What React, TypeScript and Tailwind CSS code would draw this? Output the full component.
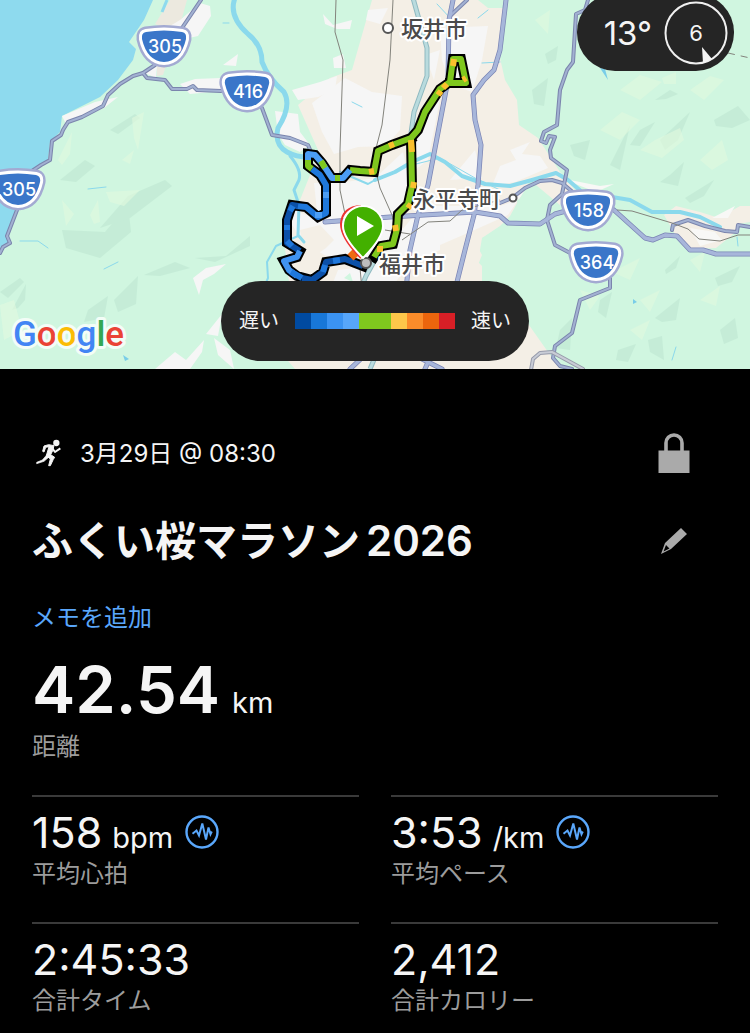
import React from "react";

const FONT = "font-['Inter','Noto_Sans_CJK_JP',sans-serif]";

const DARK_FACETS = [
  "110,130 135,114 140,118 118,134",
  "62,230 105,232 128,205 131,232 100,258 66,248",
  "100,228 128,196 165,180 172,186 130,218",
  "0,292 20,278 24,282 8,298",
  "12,310 26,284 25,300 18,308",
  "60,180 85,160 95,166 76,182",
  "144,275 175,262 190,268 160,276",
  "195,258 226,256 250,236 250,246 215,262",
  "88,310 108,296 104,318 84,322",
  "114,300 138,276 136,304 118,312",
  "610,165 630,125 620,170 612,166",
  "640,130 655,122 640,146 630,145",
  "660,140 690,112 678,140 665,150",
  "714,120 738,106 750,120 732,128 716,126",
  "670,175 684,162 678,186 660,182",
  "655,100 670,90 678,94 666,99",
  "570,145 590,140 585,160 574,156",
  "685,198 714,180 704,196 690,203",
  "655,318 680,298 676,320 662,322",
  "600,300 612,292 606,318 598,312",
  "648,340 662,336 664,360 650,352",
  "720,330 735,318 738,338 724,344",
  "665,270 680,256 676,268 666,274",
  "560,330 572,318 570,350 556,348",
  "532,90 548,78 544,106 534,104",
  "715,278 740,266 732,282 718,286",
  "618,350 636,344 628,362 616,360",
  "545,54 558,46 556,60 548,64",
  "250,340 270,320 280,352 262,360",
];
const LIGHT_FACETS = [
  "132,118 144,112 138,150 134,138",
  "58,160 72,132 70,154 62,165",
  "122,160 134,150 130,164",
  "62,200 74,214 66,226",
  "90,215 98,200 100,222 94,224",
  "106,192 140,190 124,206 110,202",
  "0,305 14,300 22,330 4,340",
  "620,90 640,75 662,82 640,100",
  "600,130 622,112 640,120 620,140",
  "690,90 710,76 724,80 704,100",
  "640,150 655,140 680,128 684,140 662,158",
  "700,160 722,140 728,160 712,170",
  "612,272 640,258 630,280",
  "640,300 660,290 650,312",
  "690,260 705,252 700,272",
  "700,300 720,286 716,306",
  "580,290 600,296 590,310",
  "630,330 650,320 642,340",
  "662,78 676,72 676,84 664,84",
  "535,20 550,10 548,34",
];

const ROADS = [
  "M201 0L182 28L155 65L143 73L133 76L120 84L108 95L103 106L82 117L68 122L63 130L61 135L52 141L50 160L41 165L32 171",
  "M17 210L7 236L10 243L3 247L0 253",
  "M143 73L147 78L165 80L172 89L187 89L193 86L197 90L221 91",
  "M262 108L272 135L290 138L308 145L311 152",
  "M588 0L585 10L576 14L573 62L567 70L560 90L557 125L544 132L541 141L546 143L549 136L555 137L550 150L551 158L567 170L562 194L550 205L547 220L555 245L572 254",
  "M610 278L610 288L580 300L572 333L555 346L553 358L560 366L572 369",
  "M500 203L512 198L525 188L540 181L552 180L562 183L575 194",
  "M672 230L673 225L688 220L705 226L725 231L737 232L738 225L750 227",
  "M467 0L450 16",
];
const WIDE_ROADS = [
  "M453 0L449 20L448 80L428 185L418 215L410 250L406 290",
  "M506 0L500 50L494 70L484 80L473 95L475 120L481 145L478 185L474 215L465 250L455 290L442 330L425 369",
  "M325 222L390 217L475 212L500 216L508 223L540 224L555 214L566 211",
  "M614 210L645 238L653 240L665 235L677 236L690 250L703 250L716 254L750 254",
  "M350 369L365 355L420 358L442 369",
];

const TRACK =
  "M374 257L381 246L393 244L397 229L398 214L408 204L412 186L411 138L418 130L425 112L440 89L450 82L453 59L461 59L466 83L450 83M411 138L392 145L378 151L374 172L360 171L350 170L343 178L332 178L322 163L315 155L308 154L308 166L320 175L326 185L326 213L318 217L306 207L292 205L287 220L287 243L300 251L297 257L284 261L289 270L297 276L312 280L323 272L326 262L345 259L363 266";
const SEGMENTS: [string, string][] = [
  ["#7fc81e", "M374 257L381 246L393 244L397 229L398 214L408 204L412 186L411 138L418 130L425 112L440 89L450 82L453 59L461 59L466 83L450 83M411 138L392 145L378 151L374 172L360 171L350 170"],
  ["#4b9df5", "M350 170L343 178L332 178L322 163L315 155L308 154L308 162"],
  ["#7fc81e", "M340 178L335 178M325 168L321 161M308 160L308 166L312 169"],
  ["#1f78dc", "M312 169L320 175L326 185L326 213L318 217L306 207L296 206"],
  ["#4b9df5", "M326 192L326 198M322 215L315 215"],
  ["#0b50a8", "M298 206L292 205L287 220L287 243L300 251"],
  ["#1f78dc", "M293 206L290 211M287 225L287 230M287 241L292 246"],
  ["#4093f0", "M300 251L297 257L284 261L289 270L297 276"],
  ["#0b50a8", "M302 278L312 280L323 272L326 262L345 259L363 266"],
  ["#1f78dc", "M291 272L302 278M323 272L325 265M333 261L340 260"],
  ["#fbc02d", "M453 66L454 59M463 80L466 78M447 84L443 88M441 91L438 95M394 144L389 146M411 140L412 152M374 171L369 172M414 182L413 188M395 225L396 231M380 246L380 252M411 204L408 208"],
];

const SHIELD = "M-18 -15Q0 -18 18 -15Q23 -14 22 -8Q17 14 0 15Q-17 14 -22 -8Q-23 -14 -18 -15Z";

function Shield({ x, y, label }: { x: number; y: number; label: string }) {
  return (
    <g transform={`translate(${x} ${y})`}>
      <path d={SHIELD} fill="none" stroke="#a3aad2" strokeWidth="11" strokeLinejoin="round" />
      <path d={SHIELD} fill="#3a76c9" stroke="#fff" strokeWidth="6" strokeLinejoin="round" />
      <path d={SHIELD} fill="#3a76c9" />
      <text x="1" y="6" textAnchor="middle" fontSize="18" fontWeight="500" fill="#fff">
        {label}
      </text>
    </g>
  );
}

function Place({ x, y, children }: { x: number; y: number; children: string }) {
  return (
    <text x={x} y={y} fontSize="22" fontWeight="500" fill="#4a4a4a" stroke="#fff" strokeWidth="4" strokeLinejoin="round" paintOrder="stroke">
      {children}
    </text>
  );
}

function RouteMap() {
  return (
    <svg viewBox="0 0 750 369" preserveAspectRatio="xMidYMid slice" className="block w-full" role="img" aria-label="ルートマップ">
      <rect width="750" height="369" fill="#d0f6e0" />
      {/* mountain relief */}
      <g fill="#b5dfcb" opacity="0.4">
        {DARK_FACETS.map((p) => <polygon key={p} points={p} />)}
      </g>
      <g fill="#e2fadf" opacity="0.6">
        {LIGHT_FACETS.map((p) => <polygon key={p} points={p} />)}
      </g>
      {/* coast */}
      <path d="M0 0H153L144 20L129 42L136 49L133 60L118 80L100 97L62 116L60 132L50 142L48 160L36 168L18 212L8 236L9 243L0 253Z" fill="#8edaee" />
      <path d="M170 0H187L180 25L168 30L155 24Z M157 64L166 66L163 75L157 76Z" fill="#ece9df" />
      <path d="M170 26L180 20L200 3L210 6L211 16L198 36L180 40ZM62 116L95 102L118 97L104 108L66 124ZM223 65L238 54L236 66ZM145 73L157 66L156 78ZM180 84L195 79L221 78L221 91L190 94Z" fill="#f6f6f6" />
      <path d="M167 0L162 12" stroke="#8edaee" strokeWidth="3" fill="none" />
      {/* plains */}
      <path d="M372 0H480L492 8H504L500 58L505 80L517 100L519 125L538 138L560 172L575 190L560 205L530 180L516 205L510 216L500 226L482 238L478 262L500 284L560 369H295L270 340L290 290L284 240L300 200L312 170L318 150L298 105L330 78L352 70Z" fill="#f4efe6" />
      <g fill="#f6f6f6">
        <path d="M323 14L333 25L352 20L350 29L337 29L325 24ZM333 58L343 54L346 68L334 68ZM292 90L320 82L337 76L335 90L318 97L298 100ZM275 111L298 114L300 132L310 145L300 152L285 145L278 134Z" />
        <path d="M312 103L345 78L372 92L402 96L400 130L386 146L358 147L334 154L322 132Z" />
        <path d="M368 10L388 8L380 24L366 20ZM440 28L488 26L482 60L472 92L450 84L442 60ZM425 55L440 50L434 80ZM415 120L440 100L428 160L415 170Z" />
        <path d="M314 183L345 182L375 178L403 152L410 182L398 215L392 240L370 258L330 258L305 244L292 225L294 210L318 220Z" />
        <path d="M422 206H500L512 202L525 190L508 215L470 232L440 250L410 262L390 290L330 290L338 270L372 266ZM450 180L475 150L482 178ZM500 166L516 160L510 150L530 142L522 154L540 156L548 168L515 182L492 186Z" />
        <path d="M193 278L206 268L226 264L214 274L203 280L199 295ZM155 369L175 352L186 360L204 340L202 352L190 369ZM206 334L222 314L218 336ZM214 338L230 350L234 369L218 355Z" />
      </g>
      <g fill="#f4efe6">
        <path d="M664 215L676 206L700 212L738 224L736 232L716 248L690 249L676 236ZM715 220L740 206H750V222L738 224Z" />
        <path d="M320 225L334 240L326 248L305 262L300 230Z M440 245L470 232L482 255L470 285H440Z" />
      </g>
      <path d="M712 218L735 206L728 218ZM690 228L715 232L722 240L700 246ZM560 178L600 186L614 184L596 192Z" fill="#f8f8f6" />
      <path d="M517 200L540 193L553 208L547 220L520 220ZM482 238L500 230L510 300H482ZM478 0H500V8L488 8Z M344 278L350 273L353 282Z" fill="#d0f6e0" />
      {/* rivers */}
      <g fill="none" stroke="#8bd9ec" strokeLinejoin="round" strokeLinecap="round">
        <path d="M235 -2Q228 16 248 34Q262 45 262 62Q268 78 284 92Q292 106 278 128Q274 145 287 152Q298 158 312 157" strokeWidth="5" />
        <path d="M290 156Q302 170 299 180L294 190L299 205L298 235L304 242" strokeWidth="3" />
        <path d="M298 236L276 246L267 262L268 278L263 290M375 180L368 184L340 172" strokeWidth="2" />
        <path d="M375 180L395 172L412 162L430 154L445 162L462 176L485 184L510 186L532 180L556 173L568 180L582 192L630 200L652 212L680 212L700 217L720 227" strokeWidth="4" />
        <path d="M412 165L440 158L475 178L500 190M20 241L38 241L48 248M104 269L118 262M88 189L106 187M352 102L362 107M482 63L500 62M478 18L488 10M437 4L452 20M672 360L676 347M223 23L229 23M737 237L738 246" strokeWidth="1" />
      </g>
      <path d="M600 68L605 69L608 80ZM633 299L637 302L633 304ZM123 355L129 359L125 361Z" fill="#79cde8" />
      {/* expressway */}
      <g fill="none" strokeLinejoin="round">
        <path d="M413 -2L427 48L427 76L414 112L410 140M376 258L366 276L360 290M370 369L376 355" stroke="#8fb9c0" strokeWidth="5" />
        <path d="M413 -2L427 48L427 76L414 112L410 140M376 258L366 276L360 290M370 369L376 355" stroke="#b9dbde" strokeWidth="3" />
      </g>
      {/* roads */}
      <g fill="none" strokeLinejoin="round" strokeLinecap="round">
        <g stroke="#7b85ad" strokeWidth="4">{ROADS.map((d) => <path key={d} d={d} />)}</g>
        <g stroke="#7b85b5" strokeWidth="5">{WIDE_ROADS.map((d) => <path key={d} d={d} />)}</g>
        <g stroke="#a2b1d2" strokeWidth="2">{ROADS.map((d) => <path key={d} d={d} />)}</g>
        <g stroke="#a7b6da" strokeWidth="3.5">{WIDE_ROADS.map((d) => <path key={d} d={d} />)}</g>
        <path d="M531 370L533 359L540 353L552 352L583 369" stroke="#969aaa" strokeWidth="4" />
        <path d="M531 370L533 359L540 353L552 352L583 369" stroke="#c8ccd6" strokeWidth="2" />
      </g>
      {/* railways */}
      <g fill="none" stroke="#83837c" strokeWidth="1">
        <path d="M336 0L335 32L343 60L340 150L340 190L345 214M393 0L390 60L382 125L373 160L380 188L392 215L397 232M402 240L428 222L450 221L462 210L500 200M385 230L410 234M360 268L362 290M617 210L632 211L672 223L688 229L699 239L720 241L738 235L750 235" />
        <path d="M728 53L750 58" strokeDasharray="7 6" />
      </g>
      {/* pace-coloured route */}
      <g fill="none" strokeLinejoin="round">
        <path d={TRACK} stroke="#000" strokeWidth="10" strokeLinejoin="miter" strokeLinecap="square" />
        {SEGMENTS.map(([color, d]) => <path key={d} d={d} stroke={color} strokeWidth="6" />)}
        <path d="M350 252L356 258" stroke="#ee6b12" strokeWidth="7" />
      </g>
      {/* place markers */}
      <g fill="#fff" stroke="#555" strokeWidth="2">
        <circle cx="388" cy="28" r="5" />
        <circle cx="513" cy="198" r="3.5" />
        <circle cx="366" cy="263" r="5" fill="#bdbdbd" />
      </g>
      <Place x={401} y={37}>坂井市</Place>
      <Place x={413} y={207}>永平寺町</Place>
      <Place x={379} y={272}>福井市</Place>
      <Shield x={164} y={47} label="305" />
      <Shield x={247} y={92} label="416" />
      <Shield x={18} y={190} label="305" />
      <Shield x={588} y={211} label="158" />
      <Shield x={596} y={263} label="364" />
      {/* start pin */}
      <path d="M361 258Q341 238 341 224Q342 207 361 206" fill="none" stroke="#e33" strokeWidth="2" />
      <path d="M363 258Q343 238 343 226A20 20 0 1 1 383 226Q383 238 363 258Z" fill="#43b000" stroke="#fff" strokeWidth="2" />
      <path d="M357 216L374 226L357 236Z" fill="#fff" />
      <text x="13" y="346" fontFamily="Roboto, sans-serif" fontSize="35" fontWeight="500" stroke="#f3fdf7" strokeWidth="6" strokeLinejoin="round" paintOrder="stroke">
        <tspan fill="#4285f4">G</tspan>
        <tspan fill="#ea4335">o</tspan>
        <tspan fill="#fbbc05">o</tspan>
        <tspan fill="#4285f4">g</tspan>
        <tspan fill="#34a853">l</tspan>
        <tspan fill="#ea4335">e</tspan>
      </text>
    </svg>
  );
}

const PACE_COLORS = [
  "bg-[#004aa0]", "bg-[#1877d8]", "bg-[#3b93f2]", "bg-[#57a6fa]", "bg-[#7fc81e]",
  "bg-[#7fc81e]", "bg-[#fdc74a]", "bg-[#fb8c2a]", "bg-[#ec650d]", "bg-[#d81f26]",
];

function PulseIcon() {
  return (
    <svg width="34" height="34" viewBox="-17 -17 34 34" fill="none" stroke="#5aa7fb" aria-hidden="true">
      <circle r="15.5" strokeWidth="2.4" />
      <path d="M-9.5 1.8L-5.5 -1.5L-3 3.5L0.3 -8.5L4 7.5L6.5 -4.5L8.5 2.2L9.8 -0.5" strokeWidth="2" />
    </svg>
  );
}

function Stat({ value, unit, label, chart }: { value: string; unit?: string; label: string; chart?: boolean }) {
  return (
    <div className="h-[127px] border-t-2 border-[#3a3a3a] pt-[9px]">
      <div className="flex h-[52px] items-center">
        <p className="flex items-baseline gap-2.5 text-[43px] leading-[52px]">
          {value}
          {unit && <span className="text-[29px] leading-none">{unit}</span>}
        </p>
        {chart && (
          <button type="button" aria-label={`${label}グラフ`} className="ml-3">
            <PulseIcon />
          </button>
        )}
      </div>
      <p className="text-2xl leading-8 text-[#9c9c9c]">{label}</p>
    </div>
  );
}

export default function App() {
  return (
    <main lang="ja" className={`min-h-screen bg-black text-[#f5f5f5] ${FONT}`}>
      <section className="relative overflow-hidden">
        <RouteMap />
        <div className="absolute -top-1.5 right-4 flex h-[77px] items-center gap-3 rounded-[38px] bg-[#252525] pr-1.5 pl-[27px]">
          <span className="pt-0.5 text-[33px]">13°</span>
          <svg width="64" height="64" viewBox="-32 -32 64 64" role="img" aria-label="風">
            <circle r="30.5" fill="none" stroke="#f0f0f0" strokeWidth="2" />
            <path d="M6 14L16 26L7 30Z" fill="#f5f5f5" />
            <text y="8" textAnchor="middle" fontSize="22" fill="#f5f5f5">6</text>
          </svg>
        </div>
        <div className="absolute bottom-2 left-1/2 flex h-20 w-[308px] -translate-x-1/2 items-center justify-center gap-4 rounded-[40px] bg-[#252525] text-xl">
          <span>遅い</span>
          <div className="flex">
            {PACE_COLORS.map((c, i) => <span key={i} className={`h-4 w-4 ${c}`} />)}
          </div>
          <span>速い</span>
        </div>
      </section>

      <section className="px-8 pt-10">
        <div className="flex h-[88px] items-center">
          <svg width="28" height="30" viewBox="0 0 84 90" className="mr-[18px] ml-0.5" fill="none" stroke="#f5f5f5" strokeLinejoin="round" aria-hidden="true">
            <circle cx="67" cy="15" r="9.5" fill="#f5f5f5" stroke="none" />
            <path d="M44 20L60 23L56 38L50 50L62 58L58 64L49 83L44 83L49 63L37 53L42 36L45 26L35 28L30 42L26 40L30 24Z" fill="#f5f5f5" strokeWidth="3" />
            <path d="M55 31L63 42L79 31" strokeWidth="6" />
            <path d="M39 50L44 58L30 70L8 77L8 73L25 66Z" fill="#f5f5f5" strokeWidth="2" />
          </svg>
          <p className="flex-1 pt-0.5 text-2xl">3月29日 @ 08:30</p>
          <button type="button" aria-label="公開設定" className="flex h-[88px] w-[88px] items-center justify-center">
            <svg width="32" height="40" viewBox="0 0 32 40" aria-hidden="true">
              <path d="M8 19V10A8 8 0 0 1 24 10V19" fill="none" stroke="#aaa" strokeWidth="3.6" />
              <path d="M0.5 17.5H31.5V40H0.5Z" fill="#aaa" />
            </svg>
          </button>
        </div>
        <div className="flex h-[88px] items-center">
          <h1 className="flex-1 text-[41px] font-semibold">
            ふくい桜マラソン<span className="ml-1.5 text-[42px]">2026</span>
          </h1>
          <button type="button" aria-label="名前を編集" className="flex h-[88px] w-[88px] items-center justify-center">
            <svg width="28" height="28" viewBox="0 0 28 28" aria-hidden="true">
              <path fillRule="evenodd" d="M21 1L27 7L11 22L1 27L5 16ZM6 18L3.5 24.5L9.5 21.5Z" fill="#aaa" />
            </svg>
          </button>
        </div>
        <a href="#memo" className="mt-[15px] block w-fit text-2xl leading-9 text-[#5aa7fb]">メモを追加</a>
        <p className="mt-[14px] flex items-baseline gap-3 text-[65px] leading-[80px] font-semibold">
          42.54
          <span className="text-[29px] leading-none font-normal">km</span>
        </p>
        <p className="mt-px mb-8 text-2xl leading-8 text-[#9c9c9c]">距離</p>
        <div className="grid grid-cols-2 gap-x-8">
          <Stat value="158" unit="bpm" label="平均心拍" chart />
          <Stat value="3:53" unit="/km" label="平均ペース" chart />
          <Stat value="2:45:33" label="合計タイム" />
          <Stat value="2,412" label="合計カロリー" />
        </div>
      </section>
    </main>
  );
}
